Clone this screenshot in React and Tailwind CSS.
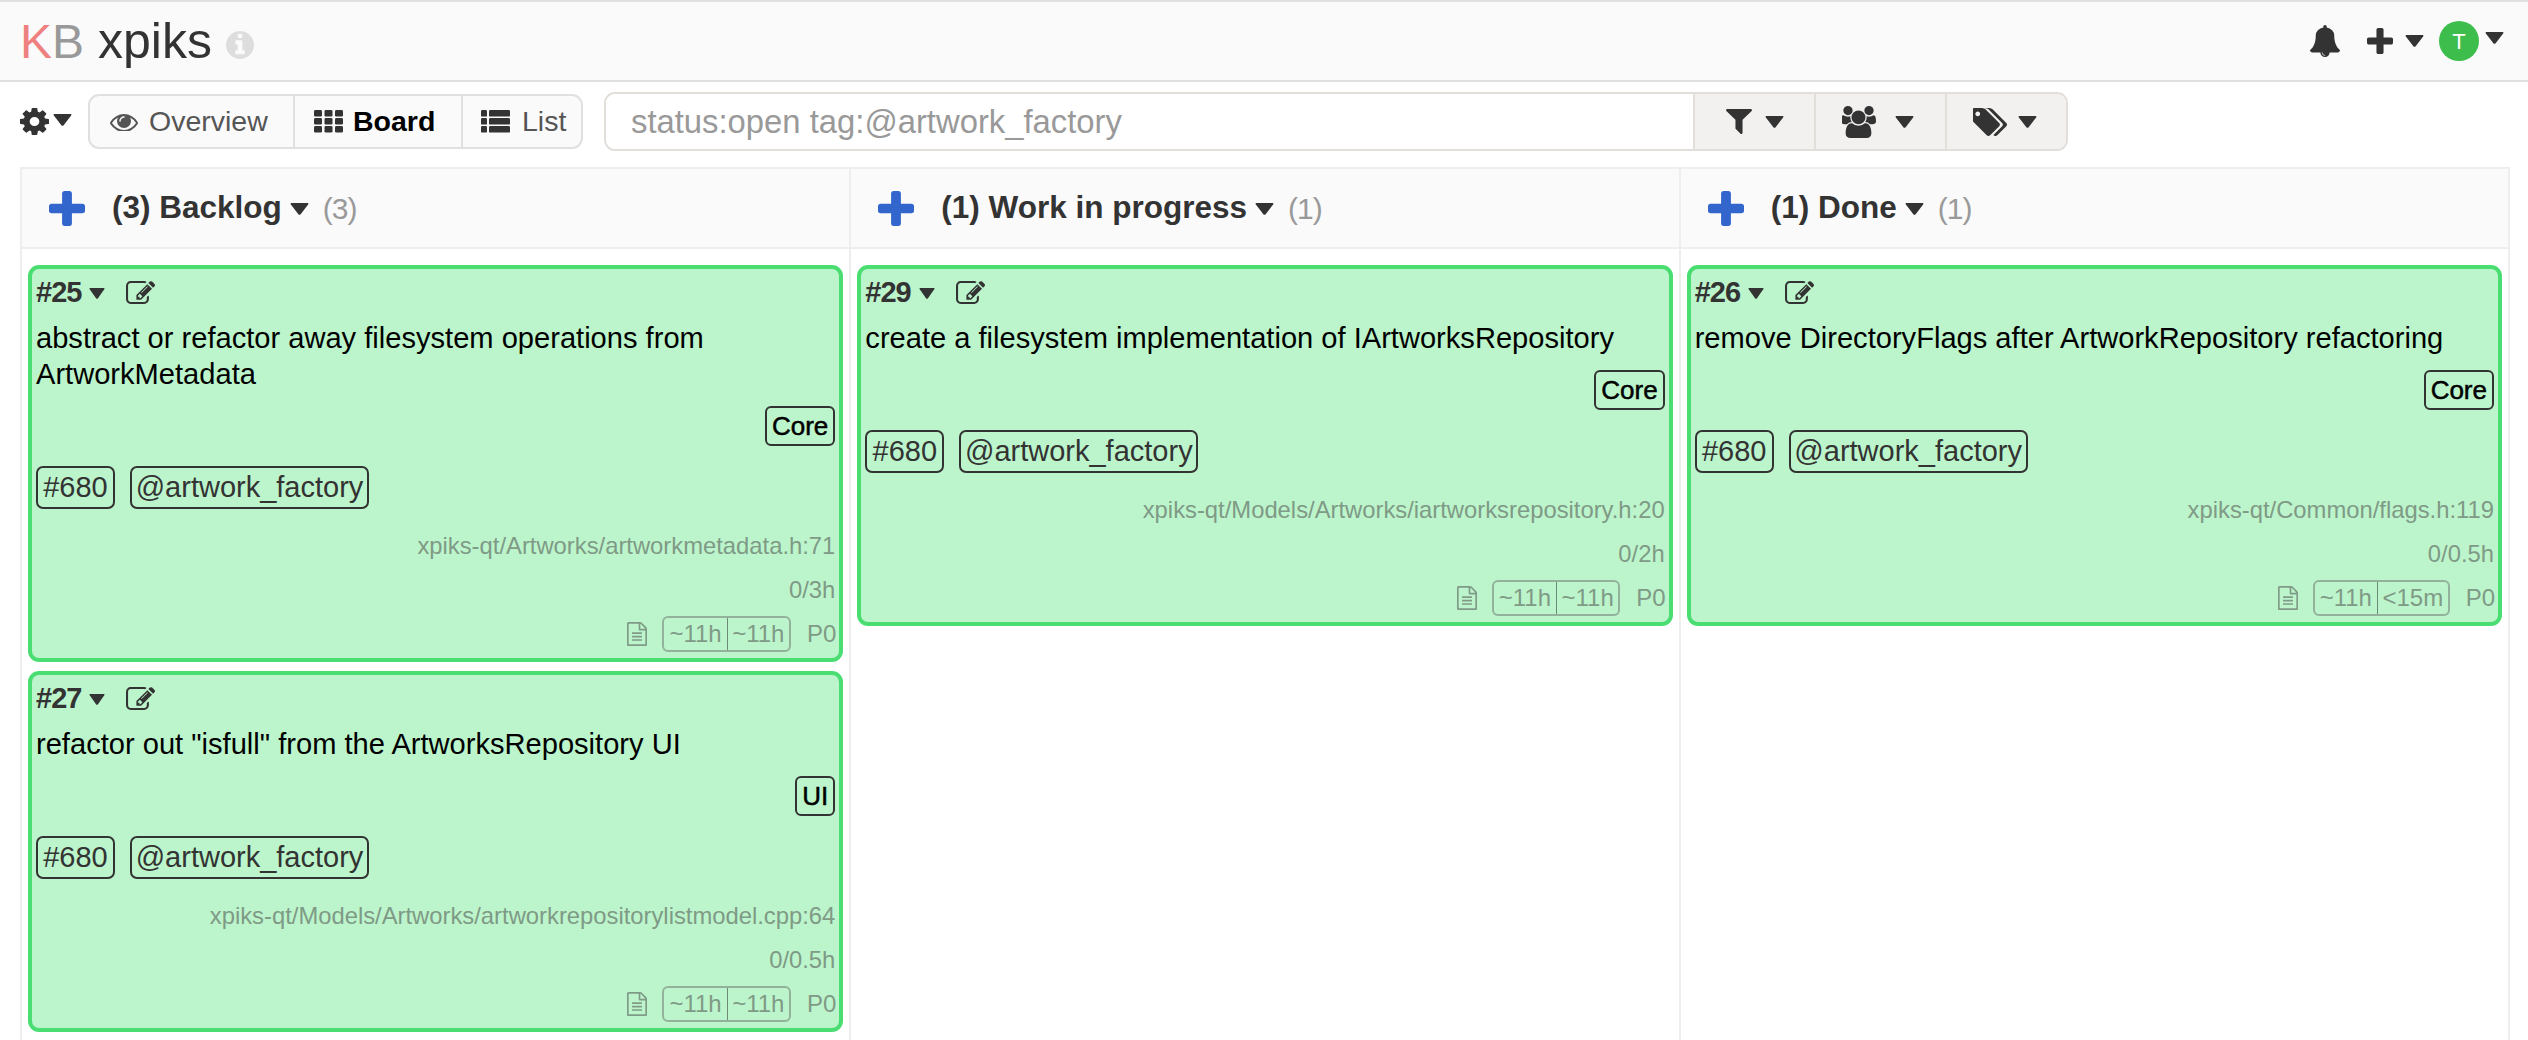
const PATHS = {
  cog: 'M1152 896q0-106-75-181t-181-75-181 75-75 181 75 181 181 75 181-75 75-181zm512-109v222q0 12-8 23t-20 13l-185 28q-19 54-39 91 35 50 107 138 10 12 10 25t-9 23q-27 37-99 108t-94 71q-12 0-26-9l-138-108q-44 23-91 38-16 136-29 186-7 28-36 28h-222q-14 0-24.5-8.5t-11.5-21.5l-28-184q-49-16-90-37l-141 107q-10 9-25 9-14 0-25-11-126-114-165-168-7-10-7-23 0-12 8-23 15-21 51-66.5t54-70.5q-27-50-41-99l-183-27q-13-2-21-12.5t-8-23.5v-222q0-12 8-23t19-13l186-28q14-46 39-92-40-57-107-138-10-12-10-24 0-10 9-23 26-36 98.5-107.5t94.5-71.5q13 0 26 10l138 107q44-23 91-38 16-136 29-186 7-28 36-28h222q14 0 24.5 8.5t11.5 21.5l28 184q49 16 90 37l142-107q9-9 24-9 13 0 25 10 129 119 165 170 7 8 7 22 0 12-8 23-15 21-51 66.5t-54 70.5q26 50 41 98l183 28q13 2 21 12.5t8 23.5z',
  eye: 'M1664 960q-152-236-381-353 61 104 61 225 0 185-131.5 316.5t-316.5 131.5-316.5-131.5-131.5-316.5q0-121 61-225-229 117-381 353 133 205 333.5 326.5t434.5 121.5 434.5-121.5 333.5-326.5zm-720-384q0-20-14-34t-34-14q-125 0-214.5 89.5t-89.5 214.5q0 20 14 34t34 14 34-14 14-34q0-86 61-147t147-61q20 0 34-14t14-34zm848 384q0 34-20 69-140 230-376.5 368.5t-499.5 138.5-499.5-139-376.5-368q-20-35-20-69t20-69q140-229 376.5-368t499.5-139 499.5 139 376.5 368q20 35 20 69z',
  filter: 'M1595 295q17 41-14 70l-493 493v742q0 42-39 59-13 5-25 5-27 0-45-19l-256-256q-19-19-19-45v-486l-493-493q-31-29-14-70 17-39 59-39h1280q42 0 59 39z',
  users: 'M529 896q-162 5-265 128h-134q-82 0-138-40.5t-56-118.5q0-353 124-353 6 0 43.5 21t97.5 42.5 119 21.5q67 0 133-23-5 37-5 66 0 139 81 256zm1071 637q0 120-73 189.5t-194 69.5h-874q-121 0-194-69.5t-73-189.5q0-53 3.5-103.5t14-109 26.5-108.5 43-97.5 62-81 85.5-53.5 111.5-20q10 0 43 21.5t73 48 107 48 135 21.5 135-21.5 107-48 73-48 43-21.5q61 0 111.5 20t85.5 53.5 62 81 43 97.5 26.5 108.5 14 109 3.5 103.5zm-1024-1277q0 106-75 181t-181 75-181-75-75-181 75-181 181-75 181 75 75 181zm704 384q0 159-112.5 271.5t-271.5 112.5-271.5-112.5-112.5-271.5 112.5-271.5 271.5-112.5 271.5 112.5 112.5 271.5zm576 225q0 78-56 118.5t-138 40.5h-134q-103-123-265-128 81-117 81-256 0-29-5-66 66 23 133 23 59 0 119-21.5t97.5-42.5 43.5-21q124 0 124 353zm-128-609q0 106-75 181t-181 75-181-75-75-181 75-181 181-75 181 75 75 181z',
  tags: 'M384 448q0-53-37.5-90.5t-90.5-37.5-90.5 37.5-37.5 90.5 37.5 90.5 90.5 37.5 90.5-37.5 37.5-90.5zm1067 576q0 53-37 90l-491 492q-39 37-91 37-53 0-90-37l-715-716q-38-37-64.5-101t-26.5-117v-416q0-52 38-90t90-38h416q53 0 117 26.5t102 64.5l715 714q37 39 37 91zm384 0q0 53-37 90l-491 492q-39 37-91 37-36 0-59-14t-53-45l470-470q37-37 37-90 0-52-37-91l-715-714q-38-38-102-64.5t-117-26.5h224q53 0 117 26.5t102 64.5l715 714q37 39 37 91z',
  bell: 'M912 1696q0-16-16-16-59 0-101.5-42.5t-42.5-101.5q0-16-16-16t-16 16q0 73 51.5 124.5t124.5 51.5q16 0 16-16zm816-288q0 52-38 90t-90 38h-448q0 106-75 181t-181 75-181-75-75-181h-448q-52 0-90-38t-38-90q50-42 91-88t85-119.5 74.5-158.5 50-206 19.5-260q0-152 117-282.5t307-158.5q-8-19-8-39 0-40 28-68t68-28 68 28 28 68q0 20-8 39 190 28 307 158.5t117 282.5q0 139 19.5 260t50 206 74.5 158.5 85 119.5 91 88z',
  plus: 'M1600 736v192q0 40-28 68t-68 28h-416v416q0 40-28 68t-68 28h-192q-40 0-68-28t-28-68v-416h-416q-40 0-68-28t-28-68v-192q0-40 28-68t68-28h416v-416q0-40 28-68t68-28h192q40 0 68 28t28 68v416h416q40 0 68 28t28 68z',
  info: 'M1152 1376v-160q0-14-9-23t-23-9h-96v-512q0-14-9-23t-23-9h-320q-14 0-23 9t-9 23v160q0 14 9 23t23 9h96v320h-96q-14 0-23 9t-9 23v160q0 14 9 23t23 9h448q14 0 23-9t9-23zm-128-896v-160q0-14-9-23t-23-9h-192q-14 0-23 9t-9 23v160q0 14 9 23t23 9h192q14 0 23-9t9-23zm640 416q0 209-103 385.5t-279.5 279.5-385.5 103-385.5-103-279.5-279.5-103-385.5 103-385.5 279.5-279.5 385.5-103 385.5 103 279.5 279.5 103 385.5z',
  edit: 'M888 1184l116-116-152-152-116 116v56h96v96h56zm440-720q-16-16-33 1l-350 350q-17 17-1 33t33-1l350-350q17-17 1-33zm80 594v190q0 119-84.5 203.5t-203.5 84.5h-832q-119 0-203.5-84.5t-84.5-203.5v-832q0-119 84.5-203.5t203.5-84.5h832q63 0 117 25 15 7 18 23 3 17-9 29l-49 49q-14 14-32 8-23-6-45-6h-832q-66 0-113 47t-47 113v832q0 66 47 113t113 47h832q66 0 113-47t47-113v-126q0-13 9-22l64-64q15-15 35-7t20 29zm-96-738l288 288-672 672h-288v-288zm444 132l-92 92-288-288 92-92q28-28 68-28t68 28l152 152q28 28 28 68t-28 68z',
  file: 'M1596 380q28 28 48 76t20 88v1152q0 40-28 68t-68 28h-1344q-40 0-68-28t-28-68v-1600q0-40 28-68t68-28h896q40 0 88 20t76 48zm-444-244v376h376q-10-29-22-41l-313-313q-12-12-41-22zm384 1528v-1024h-416q-40 0-68-28t-28-68v-416h-768v1536h1280zm-1024-864q0-14 9-23t23-9h704q14 0 23 9t9 23v64q0 14-9 23t-23 9h-704q-14 0-23-9t-9-23v-64zm736 224q14 0 23 9t9 23v64q0 14-9 23t-23 9h-704q-14 0-23-9t-9-23v-64q0-14 9-23t23-9h704zm0 256q14 0 23 9t9 23v64q0 14-9 23t-23 9h-704q-14 0-23-9t-9-23v-64q0-14 9-23t23-9h704z',
};

function Fa({ name, box = '0 0 1792 1792', className = '' }) {
  return (
    <svg viewBox={box} preserveAspectRatio="none" className={`shrink-0 fill-current ${className}`}>
      <path d={PATHS[name]} />
    </svg>
  );
}

function Caret({ size = 'w-[19px] h-[12px]', className = '' }) {
  return (
    <svg viewBox="0 0 20 12" preserveAspectRatio="none" className={`shrink-0 fill-[#333] ${size} ${className}`}>
      <path d="M1.5 0h17q1.5 0 .6 1.4L11 11.4q-1 .9-2 0L.9 1.4Q0 0 1.5 0z" />
    </svg>
  );
}

function ThIcon({ className }) {
  const xs = [0, 10.5, 21];
  return (
    <svg viewBox="0 0 29 23" className={`shrink-0 fill-current ${className}`}>
      {xs.map((x) => [0, 8, 16].map((y) => <rect key={`${x}-${y}`} x={x} y={y} width="8" height="6.6" rx="1.4" />))}
    </svg>
  );
}

function ThListIcon({ className }) {
  return (
    <svg viewBox="0 0 29 23" className={`shrink-0 fill-current ${className}`}>
      {[0, 8, 16].map((y) => (
        <g key={y}>
          <rect x="0" y={y} width="6" height="6.6" rx="1.2" />
          <rect x="8" y={y} width="21" height="6.6" rx="1.2" />
        </g>
      ))}
    </svg>
  );
}

function Card({ id, title, label, path, est, t1, t2, mb = '' }) {
  return (
    <div className={`border-4 border-[#4ade72] rounded-[11px] bg-[#bcf5cb] px-1 pt-[6px] pb-[6px] ${mb}`}>
      <div className="flex items-center h-[36px] text-[#333]">
        <span className="text-[29px] font-bold tracking-[-1px]">#{id}</span>
        <Caret size="w-[16px] h-[11px]" className="ml-[8px] mt-[1px]" />
        <Fa name="edit" box="0 128 1784 1408" className="w-[29px] h-[23px] ml-[21px] -mt-[2px]" />
      </div>
      <div className="mt-[9px] text-[29.1px] leading-[36px] text-black">{title}</div>
      <div className="flex justify-end mt-[14px]">
        <span className="h-[40px] px-[5px] border-2 border-[#333] rounded-[6px] text-[26px] leading-[36px] text-black [-webkit-text-stroke:0.5px_black]">{label}</span>
      </div>
      <div className="flex gap-[15px] mt-[20px] text-[#333]">
        <span className="h-[43px] w-[79px] text-center border-2 border-[#333] rounded-[7px] text-[29px] leading-[39px]">#680</span>
        <span className="h-[43px] w-[239px] text-center border-2 border-[#333] rounded-[7px] text-[29px] leading-[39px]">@artwork_factory</span>
      </div>
      <div className="mt-[19px] text-right text-[23.8px] leading-[36px] text-[#7f9a86]">{path}</div>
      <div className="mt-[8px] text-right text-[23.8px] leading-[36px] text-[#7f9a86]">{est}</div>
      <div className="flex items-center justify-end h-[36px] mt-[8px] text-[24px] text-[#7f9a86]">
        <Fa name="file" box="128 0 1536 1792" className="w-[20px] h-[24px] mr-[15px]" />
        <div className="flex h-[36px] border-2 border-[#93b29b] rounded-[6px] leading-[32px]">
          <span className="px-[5px] border-r border-[#6d8a75]">{t1}</span>
          <span className="px-[4.5px]">{t2}</span>
        </div>
        <span className="ml-[16px] mr-[-1px]">P0</span>
      </div>
    </div>
  );
}

function Column({ count, name, children }) {
  return (
    <div className="flex-1 flex flex-col border-x-2 border-[#eeeeee] -ml-[2px] first:ml-0">
      <div className="h-[82px] flex items-center bg-[#fafafa] border-y-2 border-[#eeeeee] pl-[27px] whitespace-nowrap">
        <Fa name="plus" box="192 128 1408 1408" className="w-[36px] h-[35px] text-[#3366cc]" />
        <span className="ml-[27px] text-[31.5px] font-bold text-[#333]">({count}) {name}</span>
        <Caret className="ml-[8px] mt-[1px]" />
        <span className="ml-[14px] text-[30px] tracking-[-1px] text-[#999999]">({count})</span>
      </div>
      <div className="flex-1 px-[6px] pt-[16px] flex flex-col">{children}</div>
    </div>
  );
}

export default function App() {
  return (
    <div className="h-screen overflow-hidden bg-white font-['Liberation_Sans',sans-serif] text-[#333]">
      <header className="h-[82px] bg-[#fafafa] border-y-2 border-[#e0e0e0] flex items-center pl-[20px] pr-[24px]">
        <span className="text-[48px] leading-none whitespace-nowrap">
          <span className="text-[#ee8080]">K</span><span className="text-[#999999]">B</span>
          <span className="text-[#333] text-[50px] ml-[14px]">xpiks</span>
        </span>
        <Fa name="info" box="128 128 1536 1536" className="w-[28px] h-[28px] ml-[14px] mt-[8px] text-[#dddddd]" />
        <div className="ml-auto flex items-center">
          <Fa name="bell" box="64 0 1664 1792" className="w-[30px] h-[32px]" />
          <Fa name="plus" box="192 128 1408 1408" className="w-[26px] h-[26px] ml-[27px]" />
          <Caret className="ml-[12px]" />
          <div className="w-[40px] h-[40px] ml-[15px] rounded-full bg-[#3dbd4c] text-white text-[22px] flex items-center justify-center">T</div>
          <Caret className="ml-[6px] -mt-[6px]" />
        </div>
      </header>

      <div className="h-[85px] flex items-center pl-[20px] pb-[6px] whitespace-nowrap">
        <Fa name="cog" box="128 128 1536 1536" className="w-[29px] h-[27px]" />
        <Caret className="ml-[4px] -mt-[3px]" />
        <div className="ml-[16px] flex h-[55px] w-[495px] border-2 border-[#e0e0e0] rounded-[11px] bg-[#fafafa] text-[28.5px]">
          <div className="w-[203px] flex items-center pl-[20px] text-[#555]">
            <Fa name="eye" box="0 320 1792 1152" className="w-[28px] h-[18px]" />
            <span className="ml-[11px]">Overview</span>
          </div>
          <div className="w-[168px] flex items-center pl-[19px] border-l-2 border-[#e0e0e0] font-bold text-black">
            <ThIcon className="w-[29px] h-[23px] text-[#333]" />
            <span className="ml-[10px]">Board</span>
          </div>
          <div className="flex-1 flex items-center pl-[18px] border-l-2 border-[#e0e0e0] text-[#555]">
            <ThListIcon className="w-[29px] h-[23px] text-[#333]" />
            <span className="ml-[12px]">List</span>
          </div>
        </div>
        <div className="ml-[21px] flex h-[59px] w-[1464px] border-2 border-[#e2deda] rounded-[11px] overflow-hidden">
          <div className="w-[1087px] flex items-center pl-[25px] bg-white text-[32.8px] text-[#999999]">status:open tag:@artwork_factory</div>
          <div className="w-[121px] flex items-center pl-[31px] border-l-2 border-[#e2deda] bg-[#f2f1ef]">
            <Fa name="filter" box="192 256 1408 1408" className="w-[26px] h-[25px]" />
            <Caret className="ml-[13px]" />
          </div>
          <div className="w-[131px] flex items-center pl-[26px] border-l-2 border-[#e2deda] bg-[#f2f1ef]">
            <Fa name="users" box="-8 0 1864 1792" className="w-[34px] h-[32px]" />
            <Caret className="ml-[19px]" />
          </div>
          <div className="flex-1 flex items-center pl-[26px] border-l-2 border-[#e2deda] bg-[#f2f1ef]">
            <Fa name="tags" box="0 128 1835 1515" className="w-[34px] h-[28px]" />
            <Caret className="ml-[11px]" />
          </div>
        </div>
      </div>

      <div className="flex pl-[20px] pr-[18px] h-[875px]">
        <Column count={3} name="Backlog">
          <Card id={25} title="abstract or refactor away filesystem operations from ArtworkMetadata" label="Core" path="xpiks-qt/Artworks/artworkmetadata.h:71" est="0/3h" t1="~11h" t2="~11h" mb="mb-[9px]" />
          <Card id={27} title={'refactor out "isfull" from the ArtworksRepository UI'} label="UI" path="xpiks-qt/Models/Artworks/artworkrepositorylistmodel.cpp:64" est="0/0.5h" t1="~11h" t2="~11h" />
        </Column>
        <Column count={1} name="Work in progress">
          <Card id={29} title="create a filesystem implementation of IArtworksRepository" label="Core" path="xpiks-qt/Models/Artworks/iartworksrepository.h:20" est="0/2h" t1="~11h" t2="~11h" />
        </Column>
        <Column count={1} name="Done">
          <Card id={26} title="remove DirectoryFlags after ArtworkRepository refactoring" label="Core" path="xpiks-qt/Common/flags.h:119" est="0/0.5h" t1="~11h" t2="<15m" />
        </Column>
      </div>
    </div>
  );
}
